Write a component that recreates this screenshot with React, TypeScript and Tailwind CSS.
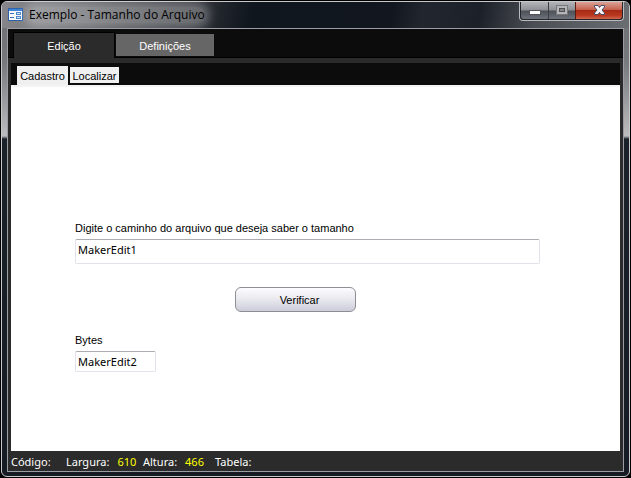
import { useState } from "react";

const UI_FONT = "font-['Liberation_Sans',Arial,sans-serif]";
const TAHOMA = "font-['Noto_Sans',Tahoma,sans-serif]";

function FormIcon() {
  return (
    <svg className="h-4 w-4 shrink-0" viewBox="0 0 16 16" shapeRendering="crispEdges">
      <rect x="0" y="1" width="15" height="13" fill="#2d62a8" />
      <rect x="1" y="2" width="13" height="2" fill="#3f83d6" />
      <rect x="1" y="4" width="13" height="9" fill="#f4f8fd" />
      <rect x="2" y="6" width="4" height="1" fill="#3b6fb5" />
      <rect x="2" y="10" width="4" height="1" fill="#3b6fb5" />
      <rect x="8" y="5" width="5" height="3" fill="#4d86cd" />
      <rect x="9" y="6" width="3" height="1" fill="#dbe8f8" />
      <rect x="8" y="9" width="5" height="3" fill="#4d86cd" />
      <rect x="9" y="10" width="3" height="1" fill="#dbe8f8" />
    </svg>
  );
}

function WindowButtons() {
  const glass = "bg-[linear-gradient(#b3b4b8_0%,#8d8f94_48%,#4b4f56_52%,#6e747d_100%)]";
  const base = "flex h-[17px] items-center justify-center";
  return (
    <div className="flex h-[19px] shrink-0 overflow-hidden rounded-b-[4px] border border-t-0 border-[#b9bbbf] bg-[#24262b] px-px pb-px">
      <button aria-label="Minimizar" className={`${base} ${glass} w-[27px] rounded-bl-[3px]`}>
        <svg className="h-[17px] w-[27px]" viewBox="0 0 27 17" shapeRendering="crispEdges">
          <rect x="8" y="8" width="12" height="5" fill="#51545b" />
          <rect x="9" y="9" width="10" height="3" fill="#fff" />
        </svg>
      </button>
      <button aria-label="Maximizar" disabled className={`${base} ${glass} w-[27px] border-l border-[#3a3c40]`}>
        <svg className="h-[17px] w-[26px]" viewBox="0 0 26 17" shapeRendering="crispEdges">
          <rect x="7" y="3" width="12" height="10" fill="#77787c" />
          <rect x="8" y="4" width="10" height="8" fill="#b4b5b8" />
          <rect x="10" y="6" width="6" height="4" fill="#4d4f53" />
          <rect x="11" y="7" width="4" height="2" fill="#85868a" />
        </svg>
      </button>
      <button
        aria-label="Fechar"
        className={`${base} w-[47px] rounded-br-[3px] border-l border-[#5a1a10] bg-[linear-gradient(#dba396_0%,#c4604e_46%,#a92a14_50%,#b93a20_80%,#d0664d_100%)]`}
      >
        <svg className="h-[17px] w-[46px]" viewBox="0 0 46 17">
          <path
            d="M18.500 3.500h3.500l1.500 2 1.500-2h3.500v1.500L26 8l2.500 3v1.500H25l-1.500-2-1.500 2h-3.500V11L21 8l-2.500-3z"
            fill="#f6f6f8"
            stroke="#4b4a68"
          />
        </svg>
      </button>
    </div>
  );
}

function TitleBar() {
  return (
    <header className="flex h-[26px] items-start rounded-t-[5px] bg-[linear-gradient(100deg,#85858a_0%,#77787c_8%,#54565b_20%,#3b3e44_30%,#20242b_35%,#10161e_40%,#12171f_62%,#22262e_67%,#1c2028_76%,#4c4f55_85%,#6a6d72_100%)] pl-[6px] pr-[5px]">
      <div className="flex flex-1 items-center gap-[5px] pt-[5px]">
        <FormIcon />
        <h1 className="rounded-full bg-white/25 font-['Open_Sans','Segoe_UI',sans-serif] text-[12px] leading-4 text-black shadow-[0_0_8px_5px_rgba(255,255,255,0.25)]">
          Exemplo - Tamanho do Arquivo
        </h1>
      </div>
      <WindowButtons />
    </header>
  );
}

function StatusItem({ label, value }: { label: string; value?: string }) {
  return (
    <div className="flex gap-2">
      <span>{label}</span>
      {value && <span className="text-[#ffff00]">{value}</span>}
    </div>
  );
}

export default function App() {
  const [path, setPath] = useState("MakerEdit1");
  const [bytes, setBytes] = useState("MakerEdit2");

  const edit =
    "block rounded-[2px] border border-[#e2e3ea] border-t-[#abadb3] bg-white px-[2px] text-[11px] text-black outline-none";

  return (
    <div className="flex min-h-screen flex-col bg-black p-px">
      <div className="flex flex-1 flex-col rounded-[6px] border border-[#c6c8cc] bg-[linear-gradient(#6b6c70_0px,#77797d_60px,#bcbcbe_134px,#1b2129_137px,#171c24_100%)]">
        <TitleBar />
        <div className="mx-[5px] mb-[4px] flex flex-1 flex-col border border-[#9a9ea4] bg-[#2b2b2b]">
          <nav className={`flex h-[29px] items-end border-b border-black bg-[#0c0c0c] pl-[5px] text-[11px] ${UI_FONT}`}>
            <button className="-mb-px h-[26px] w-[102px] border-x border-t border-black bg-[#2b2b2b] pt-px text-white">
              Edição
            </button>
            <button className="mb-px ml-px h-[22px] w-[98px] bg-[#666666] pt-[2px] text-white">Definições</button>
          </nav>

          <main className={`mx-[3px] mt-[5px] flex flex-1 flex-col bg-white ${UI_FONT}`}>
            <nav className="flex h-[22px] items-end gap-[2px] bg-[#0c0c0c] pl-[6px] text-[11px] text-black">
              <button className="h-[19px] w-[51px] bg-[#f0f0f0] pt-px">Cadastro</button>
              <button className="mb-[2px] h-[16px] w-[49px] bg-[#f0f0f0] pt-px leading-4">Localizar</button>
            </nav>
            <form
              className="flex flex-1 flex-col border-t-2 border-[#f4f4f4] pl-[64px] pr-[80px] pt-[133px] text-[11px] leading-4"
              onSubmit={(e) => e.preventDefault()}
            >
              <label htmlFor="path">Digite o caminho do arquivo que deseja saber o tamanho</label>
              <input
                id="path"
                className={`mt-[3px] h-[25px] w-full pb-1 ${edit} ${TAHOMA}`}
                value={path}
                onChange={(e) => setPath(e.target.value)}
              />
              <button
                type="submit"
                className="ml-[160px] mt-[23px] h-[25px] w-[121px] rounded-[6px] border border-[#8e8e95] bg-[linear-gradient(#fdfdfe,#e8e8ee_50%,#cdcdda)] pl-2 pt-px"
              >
                Verificar
              </button>
              <label htmlFor="bytes" className="mt-5">
                Bytes
              </label>
              <input
                id="bytes"
                className={`mt-[3px] h-[21px] w-[81px] ${edit} ${TAHOMA}`}
                value={bytes}
                onChange={(e) => setBytes(e.target.value)}
              />
            </form>
          </main>

          <footer className={`flex h-5 items-center pl-[3px] pt-[2px] text-[11px] text-white ${TAHOMA}`}>
            <div className="w-[55px]">
              <StatusItem label="Código:" />
            </div>
            <div className="w-[77px]">
              <StatusItem label="Largura:" value="610" />
            </div>
            <div className="w-[72px]">
              <StatusItem label="Altura:" value="466" />
            </div>
            <StatusItem label="Tabela:" />
          </footer>
        </div>
      </div>
    </div>
  );
}
